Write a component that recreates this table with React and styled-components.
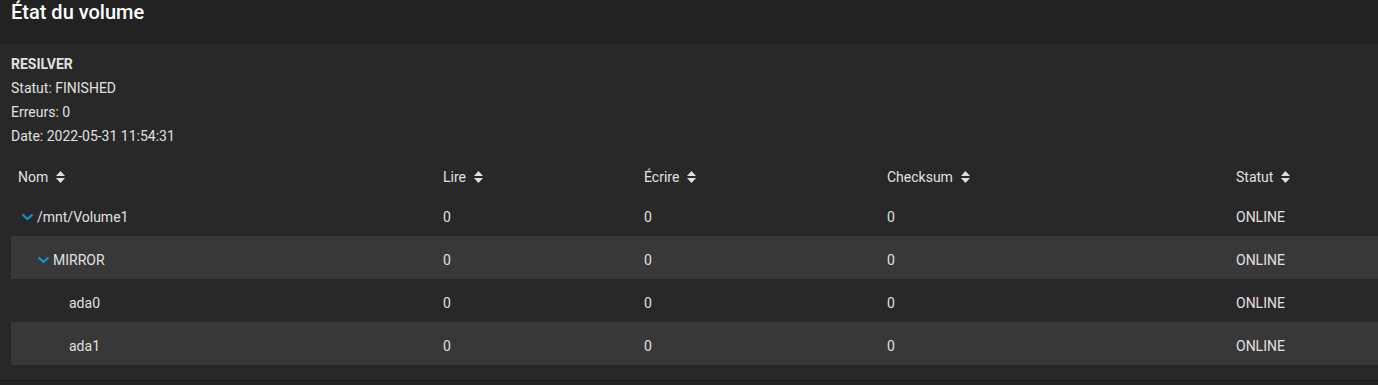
import React from "react";
import styled, { createGlobalStyle } from "styled-components";

const GlobalStyle = createGlobalStyle`
  html, body {
    margin: 0;
    padding: 0;
    background: #222222;
    font-family: Roboto, "Liberation Sans", sans-serif;
    color: #e0e0e0;
  }
`;

const Page = styled.div`
  width: 1378px;
  height: 385px;
  background: #222222;
  overflow: hidden;
`;

const Header = styled.div`
  height: 44px;
  padding: 0 11px;
  display: flex;
  align-items: flex-start;
`;

const Title = styled.h1`
  margin: 0;
  font-size: 20px;
  font-weight: 500;
  line-height: 24px;
  color: #ffffff;
`;

const Card = styled.div`
  background: #282828;
  padding: 8px 0 15px 11px;
  border-bottom: 1px solid #1a1a1a;
`;

const Details = styled.div`
  font-size: 14px;
  line-height: 24px;
  color: #e0e0e0;
`;

const DetailLine = styled.div`
  font-weight: ${(p) => (p.$bold ? 700 : 400)};
`;

const Table = styled.div`
  margin-top: 11px;
`;

const columns = "425px 201px 243px 349px 1fr";

const HeadRow = styled.div`
  display: grid;
  grid-template-columns: ${columns};
  height: 34px;
  align-items: center;
  padding-top: 1px;
  box-sizing: border-box;
`;

const HeadCell = styled.div`
  padding-left: 7px;
  display: flex;
  align-items: center;
  gap: 8px;
  font-size: 14px;
  color: #e0e0e0;
`;

const Row = styled.div`
  display: grid;
  grid-template-columns: ${columns};
  height: 43px;
  align-items: center;
  background: ${(p) => (p.$striped ? "#383838" : "transparent")};
`;

const Cell = styled.div`
  padding-left: 7px;
  padding-top: 4px;
  font-size: 14px;
  color: #e0e0e0;
  display: flex;
  align-items: center;
`;

const NameCell = styled(Cell)`
  padding-left: ${(p) => 7 + p.$level * 16}px;
`;

const Toggle = styled.span`
  width: 19px;
  display: inline-flex;
  align-items: center;
  justify-content: center;
  flex-shrink: 0;
`;

const Chevron = () => (
  <svg width="13" height="8" viewBox="0 0 13 8">
    <path d="M1.5 1.5 L6.5 6 L11.5 1.5" fill="none" stroke="#0e9ad6" strokeWidth="2" />
  </svg>
);

const SortIcon = () => (
  <svg width="9" height="12" viewBox="0 0 9 12">
    <path d="M4.5 0 L9 5 L0 5 Z" fill="#e0e0e0" />
    <path d="M4.5 12 L9 7 L0 7 Z" fill="#e0e0e0" />
  </svg>
);

const headers = ["Nom", "Lire", "Écrire", "Checksum", "Statut"];

const rows = [
  { name: "/mnt/Volume1", level: 0, expandable: true },
  { name: "MIRROR", level: 1, expandable: true },
  { name: "ada0", level: 2 },
  { name: "ada1", level: 2 },
];

export default function App() {
  return (
    <Page>
      <GlobalStyle />
      <Header>
        <Title>État du volume</Title>
      </Header>
      <Card>
        <Details>
          <DetailLine $bold>RESILVER</DetailLine>
          <DetailLine>Statut: FINISHED</DetailLine>
          <DetailLine>Erreurs: 0</DetailLine>
          <DetailLine>Date: 2022-05-31 11:54:31</DetailLine>
        </Details>
        <Table>
          <HeadRow>
            {headers.map((h) => (
              <HeadCell key={h}>
                {h}
                <SortIcon />
              </HeadCell>
            ))}
          </HeadRow>
          {rows.map((r, i) => (
            <Row key={r.name} $striped={i % 2 === 1}>
              <NameCell $level={r.level}>
                <Toggle>{r.expandable && <Chevron />}</Toggle>
                {r.name}
              </NameCell>
              <Cell>0</Cell>
              <Cell>0</Cell>
              <Cell>0</Cell>
              <Cell>ONLINE</Cell>
            </Row>
          ))}
        </Table>
      </Card>
    </Page>
  );
}
